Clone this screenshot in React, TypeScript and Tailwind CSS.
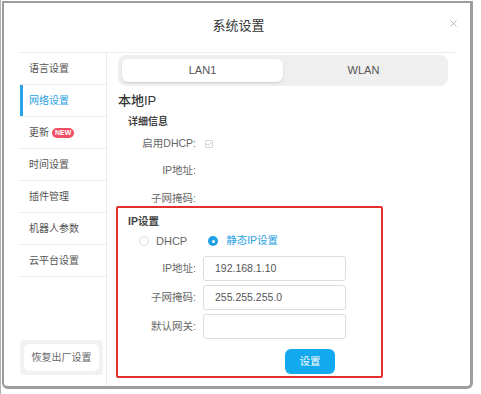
import { useState } from "react";

const menu = ["语言设置", "网络设置", "更新", "时间设置", "插件管理", "机器人参数", "云平台设置"];

const Field = ({ label, value }: { label: string; value: string }) => (
    <div className="flex items-center h-[25px]">
        <div className="w-[78px] text-right text-[10.5px] text-[#666]">{label}</div>
        <div className="ml-[7px] w-[143px] h-[25px] border border-[#dcdcdc] rounded-[3px] bg-white flex items-center pl-[11px] text-[10.5px] text-[#555]">
            {value}
        </div>
    </div>
);

export default function App() {
    const [tab, setTab] = useState(0);
    const [mode, setMode] = useState(1);

    return (
        <div className="w-[481px] h-[394px] bg-white overflow-hidden border-l border-[#b5b5b5] font-['Liberation_Sans','Noto_Sans_CJK_SC',sans-serif]">
            <div className="ml-[1px] mt-[1px] w-[471px] h-[388px] border-l-2 border-t-2 border-r-[3px] border-b-[3px] border-[#9d9d9d] rounded-b-[6px] bg-white flex flex-col">

                {/* Header */}
                <div className="h-[50px] mx-[16px] mr-[13px] border-b border-[#ececec] relative flex justify-center pt-[14px]">
                    <span className="text-[13px] leading-[17px] text-[#333]">系统设置</span>
                    <svg className="absolute right-[0px] top-[17px]" width="7" height="7" viewBox="0 0 7 7">
                        <path d="M0.5 0.5 L6.5 6.5 M6.5 0.5 L0.5 6.5" stroke="#b0b0b0" strokeWidth="0.9" />
                    </svg>
                </div>

                <div className="flex flex-1 ml-[16px] mr-[13px]">

                    {/* Sidebar */}
                    <div className="w-[87px] border-r border-[#ececec] flex flex-col pb-[11px]">
                        {menu.map((m, i) => (
                            <div key={m}
                                className={"h-[32px] border-b border-[#ececec] flex items-center pl-[9px] text-[10px] relative " + (i === 1 ? "text-[#2a9fe4]" : "text-[#555]")}>
                                {i === 1 && <div className="absolute left-0 top-0 bottom-0 w-[3px] bg-[#2aa2e6]" />}
                                {m}
                                {i === 2 && (
                                    <span className="ml-[3px] h-[10px] px-[3px] rounded-full bg-[#ef4f63] text-white text-[7px] font-bold leading-[10px]">NEW</span>
                                )}
                            </div>
                        ))}
                        <div className="flex-1" />
                        <div className="w-[83px] bg-[#f1f1f1] rounded-[4px] p-[4px]">
                            <button className="w-full h-[27px] bg-white rounded-[6px] text-[10px] text-[#666]">恢复出厂设置</button>
                        </div>
                    </div>

                    {/* Content */}
                    <div className="flex-1 pl-[11px] pr-[9px] flex flex-col">
                        <div className="mt-[2px] h-[31px] bg-[#efefef] rounded-[8px] p-[4px] grid grid-cols-2">
                            {["LAN1", "WLAN"].map((t, i) => (
                                <button key={t} onClick={() => setTab(i)}
                                    className={"rounded-[6px] text-[11px] text-[#555] " + (tab === i ? "bg-white shadow-[0_1px_2px_rgba(0,0,0,0.15)]" : "")}>
                                    {t}
                                </button>
                            ))}
                        </div>

                        <div className="mt-[5px] h-[20px] flex items-center text-[13px] font-medium text-[#333]">本地IP</div>
                        <div className="h-[20px] flex items-center pl-[10px] text-[10px] font-bold text-[#444]">详细信息</div>

                        <div className="h-[26px] flex items-center">
                            <div className="w-[78px] text-right text-[10.5px] text-[#666]">启用DHCP:</div>
                            <div className="ml-[9px] w-[8px] h-[8px] border border-[#d5d5d5] rounded-[1px] flex items-center justify-center">
                                <svg width="6" height="6" viewBox="0 0 6 6">
                                    <path d="M0.8 3 L2.4 4.6 L5.2 1.2" stroke="#c4c4c4" strokeWidth="0.9" fill="none" />
                                </svg>
                            </div>
                        </div>
                        <div className="h-[28px] flex items-center">
                            <div className="w-[78px] text-right text-[10.5px] text-[#666]">IP地址:</div>
                        </div>
                        <div className="h-[21px] overflow-hidden">
                            <div className="h-[28px] flex items-center">
                                <div className="w-[78px] text-right text-[10.5px] text-[#666]">子网掩码:</div>
                            </div>
                        </div>

                        {/* IP settings */}
                        <div className="-ml-[2px] w-[267px] h-[172px] border-2 border-[#e1302b] rounded-[2px] pt-[5px] flex flex-col">
                            <div className="h-[18px] flex items-center pl-[10px] text-[10.5px] font-bold text-[#444]">IP设置</div>
                            <div className="h-[20px] flex items-center pl-[21px]">
                                <button onClick={() => setMode(0)} className="flex items-center">
                                    <span className={"w-[10px] h-[10px] rounded-full flex items-center justify-center " + (mode === 0 ? "bg-[#1ea0e8]" : "border border-[#dadada]")}>
                                        {mode === 0 && <span className="w-[3px] h-[3px] rounded-full bg-white" />}
                                    </span>
                                    <span className={"ml-[7px] text-[11px] " + (mode === 0 ? "text-[#2a9fe4]" : "text-[#666]")}>DHCP</span>
                                </button>
                                <button onClick={() => setMode(1)} className="ml-[21px] flex items-center">
                                    <span className={"w-[10px] h-[10px] rounded-full flex items-center justify-center " + (mode === 1 ? "bg-[#1ea0e8]" : "border border-[#dadada]")}>
                                        {mode === 1 && <span className="w-[3px] h-[3px] rounded-full bg-white" />}
                                    </span>
                                    <span className={"ml-[8px] text-[10.5px] " + (mode === 1 ? "text-[#2a9fe4]" : "text-[#666]")}>静态IP设置</span>
                                </button>
                            </div>

                            <div className="mt-[5px] flex flex-col gap-[4px]">
                                <Field label="IP地址:" value="192.168.1.10" />
                                <Field label="子网掩码:" value="255.255.255.0" />
                                <Field label="默认网关:" value="" />
                            </div>

                            <div className="mt-[9px] pl-[167px]">
                                <button className="w-[50px] h-[25px] rounded-[6px] bg-[#12a9ef] text-white text-[10.5px]">设置</button>
                            </div>
                        </div>
                    </div>
                </div>
            </div>
        </div>
    );
}
